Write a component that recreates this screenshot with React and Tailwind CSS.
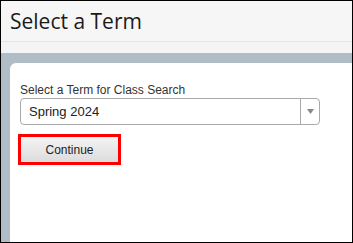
import React from "react";

const App = () => {
  return (
    <div className="w-[353px] h-[243px] border border-black flex flex-col overflow-hidden bg-[#b0bcc6]">
      <div className="h-[40px] shrink-0 bg-[#f6f6f6] flex items-center pl-[9px]">
        <h1 className="text-[21px] leading-none text-[#1a1a1a] font-['Open_Sans',sans-serif] pt-[1px]">
          Select a Term
        </h1>
      </div>
      <div className="h-[1px] shrink-0 bg-[#e4e4e4]" />
      <div className="h-[11px] shrink-0 bg-[#f3f4f6]" />
      <div className="flex-1 pt-[10px] pl-[9px] flex">
        <div className="flex-1 bg-white rounded-tl-[6px] pt-[20px] pl-[10px] font-['Liberation_Sans',Arial,sans-serif]">
          <label className="block text-[12px] leading-[14px] text-[#333]">
            Select a Term for Class Search
          </label>
          <div className="mt-[1px] w-[300px] h-[27px] border border-[#aaa] rounded-[4px] flex items-center">
            <span className="flex-1 pl-[8px] text-[13px] text-[#222]">Spring 2024</span>
            <div className="w-[19px] h-full border-l border-[#aaa] flex items-center justify-center">
              <svg width="7" height="5" viewBox="0 0 7 5">
                <path d="M0 0H7L3.5 5Z" fill="#888" />
              </svg>
            </div>
          </div>
          <div className="mt-[9px] ml-[-2px] w-[103px] h-[31px] border-[3px] border-[#ff0000]">
            <button className="w-full h-full bg-gradient-to-b from-[#f4f4f4] to-[#dcdcdc] text-[12px] text-[#222] flex items-center justify-center">
              Continue
            </button>
          </div>
        </div>
      </div>
    </div>
  );
};

export default App;
